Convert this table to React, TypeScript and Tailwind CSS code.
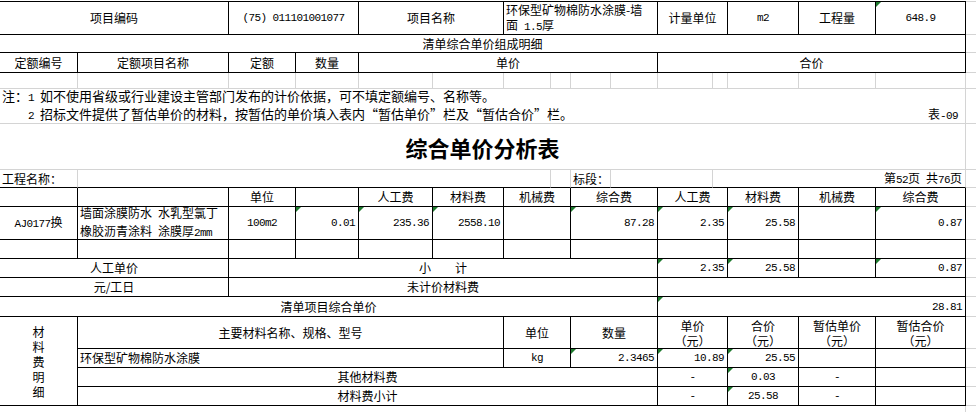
import React from 'react'
import clsx from 'clsx'

type Line = 'k' | 'g' | 'n'
type Align = 'l' | 'c' | 'r'

const spans: Record<number, string> = {
  1: 'col-span-1',
  2: 'col-span-2',
  4: 'col-span-4',
  5: 'col-span-5',
  6: 'col-span-6',
  8: 'col-span-8',
  9: 'col-span-9',
  10: 'col-span-10',
  15: 'col-span-15',
}

const rightLine: Record<Line, string> = {
  k: 'border-r border-r-black',
  g: 'border-r border-r-[#d4d4d4]',
  n: '',
}

const bottomLine: Record<Line, string> = {
  k: 'border-b border-b-black',
  g: 'border-b border-b-[#d4d4d4]',
  n: '',
}

const aligns: Record<Align, string> = {
  l: 'justify-start pl-[2px] text-left',
  c: 'justify-center text-center',
  r: 'justify-end pr-[3px] text-right',
}

interface CellProps {
  s?: number
  rb?: Line
  bb?: Line
  al?: Align
  tri?: boolean
  tall?: boolean
  className?: string
  children?: React.ReactNode
}

function Cell({ s = 1, rb = 'k', bb = 'k', al = 'c', tri, tall, className, children }: CellProps) {
  return (
    <div
      className={clsx(
        'relative flex items-center min-w-0 whitespace-nowrap',
        spans[s],
        tall && 'row-span-4',
        rightLine[rb],
        bottomLine[bb],
        aligns[al],
        className,
      )}
    >
      {tri && (
        <span className="absolute left-0 top-0 h-0 w-0 border-t-[5px] border-r-[5px] border-t-[#1e7b2e] border-r-transparent" />
      )}
      {children}
    </div>
  )
}

// spreadsheet grid cell with no table border
function G(props: CellProps) {
  return <Cell rb="g" bb="g" {...props} />
}

// the narrow column beyond the table
function Edge() {
  return <Cell rb="n" bb="g" />
}

// SimSun-like half width digits
function N({ children }: { children: React.ReactNode }) {
  return <span className="font-['Liberation_Mono',monospace] text-[11px] tracking-[-0.6px] whitespace-pre">{children}</span>
}

function Two({ a, b }: { a: React.ReactNode; b: React.ReactNode }) {
  return (
    <div className="flex flex-col items-center leading-[15px]">
      <span>{a}</span>
      <span>{b}</span>
    </div>
  )
}

export default function App() {
  return (
    <div className="w-[976px] h-[412px] overflow-hidden bg-white text-black font-['Noto_Sans_CJK_SC',sans-serif] text-[12px] leading-[14px]">
      <div className="grid grid-cols-[78px_151px_67px_63px_74px_71px_47px_20px_40px_47px_55px_15px_71px_77px_90px_11px] grid-rows-[2px_33px_18px_20px_16px_35px_46px_18px_19px_33px_19px_19px_19px_20px_32px_19px_19px_19px_7px]">
        {/* cropped row above */}
        <Cell s={15} rb="n" />
        <Edge />

        {/* item info */}
        <Cell s={2}>项目编码</Cell>
        <Cell s={2}>
          <N>(75) 011101001077</N>
        </Cell>
        <Cell s={2}>项目名称</Cell>
        <Cell s={4} al="l">
          <div className="leading-[15px]">
            环保型矿物棉防水涂膜-墙
            <br />
            面<N> 1.5</N>厚
          </div>
        </Cell>
        <Cell s={2}>计量单位</Cell>
        <Cell>
          <N>m2</N>
        </Cell>
        <Cell>工程量</Cell>
        <Cell tri>
          <N>648.9</N>
        </Cell>
        <Edge />

        <Cell s={15}>清单综合单价组成明细</Cell>
        <Edge />

        <Cell>定额编号</Cell>
        <Cell>定额项目名称</Cell>
        <Cell>定额</Cell>
        <Cell>数量</Cell>
        <Cell s={6}>单价</Cell>
        <Cell s={5}>合价</Cell>
        <Edge />

        {/* empty sheet row */}
        <G />
        <G />
        <G />
        <G />
        <G />
        <G />
        <G />
        <G />
        <G />
        <G />
        <G />
        <G />
        <G />
        <G />
        <G />
        <Edge />

        {/* notes */}
        <G s={15} al="l" className="pl-[1px]">
          <div className="w-full flex flex-col text-[13px] leading-[16px]">
            <div>
              注：<N>1 </N>如不使用省级或行业建设主管部门发布的计价依据，可不填定额编号、名称等。
            </div>
            <div className="flex justify-between">
              <span className="pl-[26px]">
                <N>2 </N>招标文件提供了暂估单价的材料，按暂估的单价填入表内“暂估单价”栏及“暂估合价”栏。
              </span>
              <span className="pr-[7px] text-[12px]">
                表<N>-09</N>
              </span>
            </div>
          </div>
        </G>
        <Edge />

        <G s={15}>
          <div className="text-[22px] font-bold leading-none">综合单价分析表</div>
        </G>
        <Edge />

        {/* project line */}
        <G al="l" bb="k" className="pl-[1px]">
          工程名称：
        </G>
        <G s={6} bb="k" />
        <G bb="k" />
        <G al="l" bb="k">
          标段：
        </G>
        <G s={2} bb="k" />
        <G s={4} al="r" bb="k">
          <span>
            第<N>52</N>页<N> </N>共<N>76</N>页
          </span>
        </G>
        <Edge />

        {/* detail header */}
        <Cell />
        <Cell />
        <Cell>单位</Cell>
        <Cell />
        <Cell>人工费</Cell>
        <Cell>材料费</Cell>
        <Cell s={2}>机械费</Cell>
        <Cell s={2}>综合费</Cell>
        <Cell s={2}>人工费</Cell>
        <Cell>材料费</Cell>
        <Cell>机械费</Cell>
        <Cell>综合费</Cell>
        <Edge />

        <Cell>
          <span>
            <N>AJ0177</N>换
          </span>
        </Cell>
        <Cell al="l">
          <div className="leading-[15px]">
            墙面涂膜防水<N> </N>水乳型氯丁
            <br />
            橡胶沥青涂料<N> </N>涂膜厚<N>2mm</N>
          </div>
        </Cell>
        <Cell>
          <N>100m2</N>
        </Cell>
        <Cell al="r" tri>
          <N>0.01</N>
        </Cell>
        <Cell al="r" tri>
          <N>235.36</N>
        </Cell>
        <Cell al="r" tri>
          <N>2558.10</N>
        </Cell>
        <Cell s={2} />
        <Cell s={2} al="r" tri>
          <N>87.28</N>
        </Cell>
        <Cell s={2} al="r" tri>
          <N>2.35</N>
        </Cell>
        <Cell al="r" tri>
          <N>25.58</N>
        </Cell>
        <Cell />
        <Cell al="r" tri>
          <N>0.87</N>
        </Cell>
        <Edge />

        <Cell />
        <Cell />
        <Cell />
        <Cell />
        <Cell />
        <Cell />
        <Cell s={2} />
        <Cell s={2} />
        <Cell s={2} />
        <Cell />
        <Cell />
        <Cell />
        <Edge />

        <Cell s={2}>人工单价</Cell>
        <Cell s={8}>小　　计</Cell>
        <Cell s={2} al="r" tri>
          <N>2.35</N>
        </Cell>
        <Cell al="r" tri>
          <N>25.58</N>
        </Cell>
        <Cell />
        <Cell al="r" tri>
          <N>0.87</N>
        </Cell>
        <Edge />

        <Cell s={2}>元/工日</Cell>
        <Cell s={8}>未计价材料费</Cell>
        <Cell s={5} />
        <Edge />

        <Cell s={10}>清单项目综合单价</Cell>
        <Cell s={5} al="r" tri>
          <N>28.81</N>
        </Cell>
        <Edge />

        {/* material detail */}
        <Cell tall>
          <div className="flex flex-col items-center leading-[15px]">
            <span>材</span>
            <span>料</span>
            <span>费</span>
            <span>明</span>
            <span>细</span>
          </div>
        </Cell>
        <Cell s={5}>主要材料名称、规格、型号</Cell>
        <Cell s={2}>单位</Cell>
        <Cell s={2}>数量</Cell>
        <Cell s={2}>
          <Two a="单价" b="（元）" />
        </Cell>
        <Cell>
          <Two a="合价" b="（元）" />
        </Cell>
        <Cell>
          <Two a="暂估单价" b="（元）" />
        </Cell>
        <Cell>
          <Two a="暂估合价" b="（元）" />
        </Cell>
        <Edge />

        <Cell s={5} al="l">
          环保型矿物棉防水涂膜
        </Cell>
        <Cell s={2}>
          <N>kg</N>
        </Cell>
        <Cell s={2} al="r" tri>
          <N>2.3465</N>
        </Cell>
        <Cell s={2} al="r" tri>
          <N>10.89</N>
        </Cell>
        <Cell al="r" tri>
          <N>25.55</N>
        </Cell>
        <Cell />
        <Cell />
        <Edge />

        <Cell s={9}>其他材料费</Cell>
        <Cell s={2}>
          <N>-</N>
        </Cell>
        <Cell tri>
          <N>0.03</N>
        </Cell>
        <Cell>
          <N>-</N>
        </Cell>
        <Cell />
        <Edge />

        <Cell s={9}>材料费小计</Cell>
        <Cell s={2}>
          <N>-</N>
        </Cell>
        <Cell tri>
          <N>25.58</N>
        </Cell>
        <Cell>
          <N>-</N>
        </Cell>
        <Cell />
        <Edge />

        <G s={15} bb="n" />
        <Cell rb="n" bb="n" />
      </div>
    </div>
  )
}
